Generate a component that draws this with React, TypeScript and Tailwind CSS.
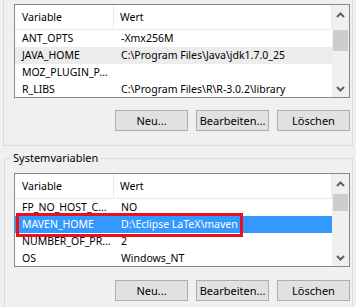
import React from "react";

type Row = { name: string; value: string; kind?: "hover" | "selected" };

function Chevron({ up }: { up: boolean }) {
  return (
    <svg width="9" height="6" viewBox="0 0 9 6" className="block">
      <polyline
        points={up ? "1,5 4.5,1.5 8,5" : "1,1 4.5,4.5 8,1"}
        fill="none"
        stroke="#606060"
        strokeWidth="2"
      />
    </svg>
  );
}

function ListView({ rows, thumbTop, thumbH, overlay }: { rows: Row[]; thumbTop: number; thumbH: number; overlay?: boolean }) {
  return (
    <div className="relative flex h-[94px] w-[336px] border border-[#828790] bg-white text-[10.5px]">
      <div className="flex w-[317px] flex-col">
        <div className="flex h-[25px] items-center border-b border-r border-[#e5ebf3]">
          <div className="h-full w-[99px] border-r border-[#e5ebf3] pl-[7px] leading-[25px]">Variable</div>
          <div className="pl-[6px] leading-[25px]">Wert</div>
        </div>
        {rows.map((r) => (
          <div
            key={r.name}
            className={
              "flex h-[17px] leading-[17px] " +
              (r.kind === "selected" ? "bg-[#3399ff] text-white" : r.kind === "hover" ? "bg-[#ececec]" : "")
            }
          >
            <div className="w-[99px] overflow-hidden text-ellipsis whitespace-nowrap pl-[7px] pr-[3px]">{r.name}</div>
            <div className="whitespace-nowrap pl-[7px]">{r.value}</div>
          </div>
        ))}
      </div>
      <div className="relative flex w-[17px] flex-col bg-[#f0f0f0]">
        <div className="flex h-[17px] items-center justify-center pt-[2px]">
          <Chevron up />
        </div>
        <div className="mx-[1px] w-[15px] bg-[#cdcdcd]" style={{ marginTop: thumbTop - 17, height: thumbH }} />
        <div className="flex-1" />
        <div className="flex h-[17px] items-center justify-center">
          <Chevron up={false} />
        </div>
      </div>
      {overlay && (
        <div className="absolute left-[1px] top-[39px] h-[24px] w-[227px] border-[3px] border-[#e81123]" />
      )}
    </div>
  );
}

function Buttons() {
  return (
    <div className="flex justify-end gap-[8px] pr-[2px]">
      {["Neu...", "Bearbeiten...", "Löschen"].map((b) => (
        <div
          key={b}
          className="flex h-[21px] w-[73px] items-center justify-center border border-[#adadad] bg-[#e1e1e1] leading-none"
        >
          {b}
        </div>
      ))}
    </div>
  );
}

export default function App() {
  const userRows: Row[] = [
    { name: "ANT_OPTS", value: "-Xmx256M" },
    { name: "JAVA_HOME", value: "C:\\Program Files\\Java\\jdk1.7.0_25", kind: "hover" },
    { name: "MOZ_PLUGIN_PATH", value: "" },
    { name: "R_LIBS", value: "C:\\Program Files\\R\\R-3.0.2\\library" },
  ];
  const sysRows: Row[] = [
    { name: "FP_NO_HOST_CHECK", value: "NO" },
    { name: "MAVEN_HOME", value: "D:\\Eclipse LaTeX\\maven", kind: "selected" },
    { name: "NUMBER_OF_PROCESSORS", value: "2" },
    { name: "OS", value: "Windows_NT" },
  ];
  return (
    <div
      className="h-[307px] w-[356px] overflow-hidden bg-[#f0f0f0] text-[11px] text-black"
      style={{ fontFamily: '"Noto Sans", "Open Sans", sans-serif' }}
    >
      <div className="ml-[3px] w-[350px] border-x border-b border-[#dcdcdc] pb-[14px] pl-[10px] pt-[4px]">
        <ListView rows={userRows} thumbTop={25} thumbH={21} />
        <div className="mt-[12px]">
          <Buttons />
        </div>
      </div>
      <div className="relative ml-[4px] mt-[12px] h-[200px] w-[349px] border-x border-t border-[#dcdcdc] pl-[9px] pt-[14px]">
        <div className="absolute left-[6px] top-[-9px] bg-[#f0f0f0] px-[2px] leading-[16px]">Systemvariablen</div>
        <ListView rows={sysRows} thumbTop={20} thumbH={17} overlay />
        <div className="mt-[13px]">
          <Buttons />
        </div>
      </div>
    </div>
  );
}
